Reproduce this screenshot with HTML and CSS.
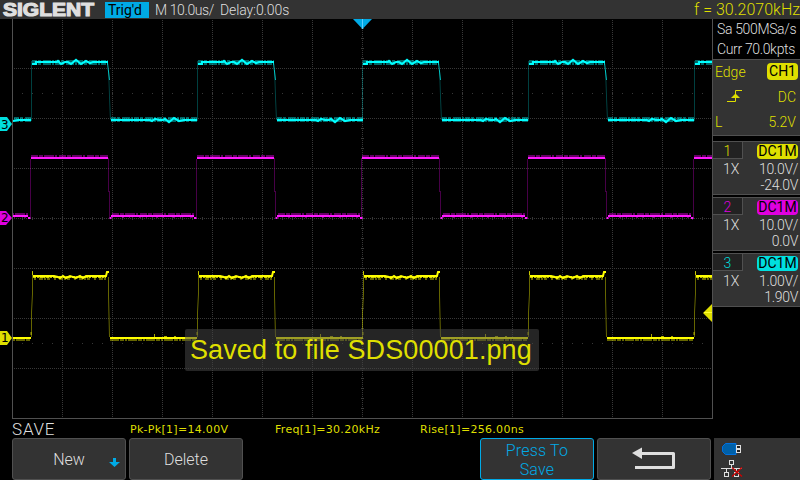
FILE: index.html
```html
<!DOCTYPE html>
<html lang="en">
<head>
<meta charset="utf-8">
<title>Oscilloscope</title>
<link rel="stylesheet" href="styles.css">
</head>
<body>
<div class="scope">
  <header class="topbar">
    <span class="brand"><b>SIGLENT</b></span>
    <span class="trig-state">Trig'd</span>
    <span class="timebase">M 10.0us/</span>
    <span class="delay">Delay:0.00s</span>
    <span class="frequency">f = 30.2070kHz</span>
  </header>

  <main class="middle">
    <section class="display">
      <svg class="plot" width="712" height="400" viewBox="0 19 712 400">
        <defs>
          <clipPath id="area"><rect x="13" y="20" width="699" height="398"/></clipPath>
          <g id="cyan" fill="none">
            <path class="halo" stroke="#0ff" stroke-width="5" stroke-dasharray="5 1 3 2 8 1 2 1" d="M32 62.500H108M111 119.500H197"/>
            <path stroke="#0ff" stroke-width="1" opacity=".25" d="M31.500 121V61M108.500 70L109.500 95V98L110.500 120"/>
            <path stroke="#0ff" stroke-width="1" opacity=".7" d="M107.500 63L109.500 80"/>
            <path stroke="#0ff" stroke-width="2.200" d="M32 64H36V62H57L58 61L61 64L65 62H68L71 64L76 60L81 64L86 61L90 63L93 62H108M111 120H150L152 121L155 119L159 120H163L165 119L169 122L174 118L179 121L184 120H197"/>
          </g>
          <g id="magenta" fill="none">
            <path class="halo" stroke="#f0f" stroke-width="2" stroke-dasharray="7 1 4 1 10 1 2 2" d="M31 156H108M112 214H194"/>
            <path class="halo" stroke="#f0f" stroke-width="1" stroke-dasharray="1 9 2 5" d="M112 217.500H194"/>
            <path stroke="#f0f" opacity=".28" d="M30.500 217V159M108.500 158V192M109.500 191V217"/>
            <path stroke="#ff1aff" stroke-width="2" d="M31 158H108M111 216H194M109.500 218H111.500M194 218H196.500"/>
          </g>
          <g id="yellow" fill="none">
            <path class="halo" stroke="#ff0" stroke-width="2" stroke-dasharray="9 1 4 1 2 1" d="M110 340H197"/>
            <path class="halo" stroke="#ff0" stroke-width="4" stroke-dasharray="2 3 4 1 2 1 3 4" d="M34 278H107"/>
            <path stroke="#ff0" opacity=".4" d="M31.500 337V312L32.500 294V271.500M108.500 277V296L109.500 337"/>
            <path stroke="#ff0" stroke-width="1" opacity=".65" d="M32.500 271V275M154.500 334V337M164 336.500H167M174 336.500H176M197 335V332"/>
            <path stroke="#ff0" stroke-width="2" d="M33 276H54L58 277L60 278L63 276L66 278L70 276L76 278L80 276L83 278L86 276H106L107 272H109M110 338H197"/>
            <path stroke="#ff0" stroke-width="2" opacity=".75" stroke-dasharray="3 1 2 1 5 1" d="M33 277H106"/>
          </g>
        </defs>

        <g class="grid" fill="none" stroke="#383838" shape-rendering="crispEdges">
          <path stroke-dasharray="1 1" d="M62.500 20V418M112.500 20V418M162.500 20V418M212.500 20V418M262.500 20V418M312.500 20V418M362.500 20V418M412.500 20V418M462.500 20V418M512.500 20V418M562.500 20V418M612.500 20V418M662.500 20V418"/>
          <path stroke-dasharray="1 1" d="M14 68.500H712M14 118.500H712M14 168.500H712M14 218.500H712M14 268.500H712M14 318.500H712M14 368.500H712"/>
          <path stroke-dasharray="1 9" d="M22 93.500H712M22 343.500H712"/>
          <path stroke-width="3" stroke-dasharray="1 9" d="M22 218.500H712M362.500 28V418"/>
          <path stroke="#505050" d="M12.500 19V418.500H712"/>
        </g>

        <g clip-path="url(#area)">
          <use href="#cyan" x="-166"/><use href="#cyan"/><use href="#cyan" x="166"/><use href="#cyan" x="331"/><use href="#cyan" x="497"/><use href="#cyan" x="663"/>
          <use href="#magenta" x="-166"/><use href="#magenta"/><use href="#magenta" x="166"/><use href="#magenta" x="331"/><use href="#magenta" x="497"/><use href="#magenta" x="663"/>
          <use href="#yellow" x="-166"/><use href="#yellow"/><use href="#yellow" x="166"/><use href="#yellow" x="331"/><use href="#yellow" x="497"/><use href="#yellow" x="663"/>
        </g>

        <path fill="#00aae6" d="M353 19H372L362.500 29Z"/><path stroke="#5cceff" d="M362.500 19V29"/>
        <path fill="#dfdf00" d="M712 304V322L703 313Z"/><path stroke="#ff3" d="M704 312.500H712"/>
        <g class="marker">
          <path fill="#00dfdf" d="M0 117H7L12 124L7 131H0Z"/><text x="1" y="129">3</text>
          <path fill="#df00df" d="M0 211H6L12 218L6 225H0Z"/><text x="1" y="222">2</text>
          <path fill="#dfdf00" d="M0 331H7L12 338L7 345H0Z"/><text x="1" y="342">1</text>
        </g>
      </svg>
      <div class="toast"><span>Saved to file SDS00001.png</span></div>
    </section>

    <aside class="side">
      <div class="acquire"><p>Sa 500MSa/s</p><p>Curr 70.0kpts</p></div>
      <div class="trigger">
        <div class="row"><span>Edge</span><span class="badge">CH1</span></div>
        <div class="row">
          <svg class="edge" width="16" height="13" viewBox="0 0 16 13"><path d="M0 11.500H8.500V.500H15" fill="none" stroke="#dfdf00"/><path d="M4 8L8.500 3.500L13 8Z" fill="#dfdf00"/></svg>
          <span>DC</span>
        </div>
        <div class="row"><span>L</span><span>5.2V</span></div>
      </div>
      <div class="channel ch1">
        <span class="tab">1</span><span class="badge">DC1M</span>
        <span class="probe">1X</span><span class="value">10.0V/</span>
        <span class="value offset">-24.0V</span>
      </div>
      <div class="channel ch2">
        <span class="tab">2</span><span class="badge">DC1M</span>
        <span class="probe">1X</span><span class="value">10.0V/</span>
        <span class="value offset">0.0V</span>
      </div>
      <div class="channel ch3">
        <span class="tab">3</span><span class="badge">DC1M</span>
        <span class="probe">1X</span><span class="value">1.00V/</span>
        <span class="value offset">1.90V</span>
      </div>
    </aside>
  </main>

  <div class="readouts">
    <span class="menu-name">SAVE</span>
    <span>Pk-Pk[1]=14.00V</span>
    <span>Freq[1]=30.20kHz</span>
    <span>Rise[1]=256.00ns</span>
  </div>

  <footer class="softkeys">
    <div class="key">New
      <svg class="more" width="11" height="9" viewBox="0 0 11 9"><path fill="#00aae6" d="M4 0H7V4H11L5.500 9L0 4H4Z"/></svg>
    </div>
    <div class="key">Delete</div>
    <div class="key active">Press To<br>Save</div>
    <div class="key">
      <svg class="back" width="44" height="24" viewBox="0 0 44 24"><path d="M9 6.500H41.500V20.500H3" fill="none" stroke="#dfdfdf" stroke-width="3" stroke-linejoin="round"/><path d="M0 6L10 .500V12Z" fill="#dfdfdf"/></svg>
    </div>
    <div class="status">
      <svg width="22" height="36" viewBox="0 0 22 36">
        <path d="M15 1.500H4.500L1.500 4.500V9.500L4.500 12.500H15Z" fill="#0060a8" stroke="#0070e0"/>
        <path d="M15 3H20V11H15Z" fill="#dfdfdf"/><path d="M16 4H19V6H16ZM16 8H19V10H16Z" fill="#222"/>
        <g fill="none" stroke="#dfdfdf" shape-rendering="crispEdges"><path d="M8.500 18.500H12.500V22.500H8.500ZM10.500 23V26.500M0 26.500H21M5.500 27V30M15.500 27V30M3.500 30.500H7.500V34.500H3.500ZM13.500 30.500H17.500V34.500H13.500Z"/></g>
        <path d="M11 25.500L21 34.500M21 25.500L11 34.500" stroke="#d00000" stroke-width="1.200"/>
      </svg>
    </div>
  </footer>
</div>
</body>
</html>
```
FILE: styles.css
```css
* { box-sizing: border-box; }
body, p { margin: 0; }
body { background: #000; overflow: hidden; }
svg { display: block; }

.scope {
  width: 800px;
  height: 480px;
  display: grid;
  grid-template-rows: 19px 400px 19px 42px;
  color: #dfdfdf;
  font: 300 14px/16px Roboto, "Liberation Sans", sans-serif;
  white-space: nowrap;
}

.topbar { display: flex; align-items: center; background: #333; }
.brand { width: 105px; height: 19px; padding-left: 3px; }
.brand b {
  display: block;
  width: 90px;
  font: 700 19px/19px "Liberation Sans", sans-serif;
  -webkit-text-stroke: 1.2px #dfdfdf;
  transform: scaleX(1.105);
  transform-origin: left;
}
.trig-state { width: 44px; height: 16px; padding-left: 3px; background: #00aae6; color: #000; font-weight: 400; }
.timebase { width: 71px; padding-left: 6px; letter-spacing: -.4px; }
.delay { letter-spacing: -.1px; }
.frequency { margin-left: auto; color: #dfdf00; font-size: 16px; }

.middle { display: grid; grid-template-columns: 712px 88px; }
.display { position: relative; }
.halo { opacity: .4; }
.marker text { font: 12px "DejaVu Sans", sans-serif; fill: #000; }
.toast {
  position: absolute;
  left: 185px;
  top: 310px;
  width: 354px;
  height: 42px;
  padding-left: 5px;
  border-radius: 2px;
  background: rgba(70, 70, 70, .52);
  color: #dfdf00;
  font: 27px/43px "Liberation Sans", sans-serif;
  letter-spacing: .1px;
}

.side { border-left: 1px solid #505050; display: flex; flex-direction: column; }
.acquire { height: 40px; padding: 0 0 0 4px; line-height: 20px; letter-spacing: -.35px; }
.trigger {
  height: 77px;
  margin-bottom: 5px;
  padding: 3px 4px 0 2px;
  border-top: 1px solid #505050;
  border-bottom: 1px solid #505050;
  background: #333;
  color: #dfdf00;
}
.row { display: flex; justify-content: space-between; align-items: center; height: 17px; margin-bottom: 8px; }
.edge { margin-left: 12px; }
.badge { border-radius: 4px; background: #dfdf00; color: #000; font-weight: 400; text-align: center; }
.trigger .badge { width: 31px; height: 17px; line-height: 17px; margin-right: -2px; }

.channel {
  display: grid;
  grid-template: 17px 18px 16px / 30px 1fr;
  height: 54px;
  margin-bottom: 2px;
  padding-right: 2px;
  border-top: 1px solid #505050;
  border-bottom: 1px solid #505050;
  background: #333;
}
.tab { background: #222; border-right: 1px solid #505050; border-bottom: 1px solid #505050; text-align: center; line-height: 18px; }
.channel .badge { justify-self: end; width: 41px; height: 15px; margin-top: 2px; line-height: 15px; }
.probe { padding-left: 10px; line-height: 20px; }
.value { text-align: right; line-height: 20px; letter-spacing: -.3px; }
.offset { grid-column: 2; line-height: 17px; }
.ch1 .tab { color: #dfdf00; }
.ch2 .tab { color: #df00df; }
.ch3 .tab { color: #00dfdf; }
.ch2 .badge { background: #df00df; }
.ch3 .badge { background: #00dfdf; }

.readouts {
  display: grid;
  grid-template-columns: 118px 145px 145px 200px;
  padding-left: 12px;
  color: #dfdf00;
  font: 11px/21px "DejaVu Sans", sans-serif;
  letter-spacing: .3px;
}
.menu-name { color: #dfdfdf; font: 300 17px/21px Roboto, sans-serif; letter-spacing: .8px; }

.softkeys { display: grid; grid-template-columns: repeat(6, 114px) 86px; gap: 3px; padding-left: 12px; }
.key {
  position: relative;
  display: flex;
  align-items: center;
  justify-content: center;
  border: 1px solid #505050;
  border-radius: 3px;
  background: #333;
  font-size: 16px;
  line-height: 19px;
  text-align: center;
}
.active { grid-column: 5; border-color: #00aae6; color: #00aae6; letter-spacing: .2px; padding-top: 2px; }
.more { position: absolute; right: 5px; bottom: 12px; }
.status { background: #333; padding: 4px 0 0 7px; }
```
